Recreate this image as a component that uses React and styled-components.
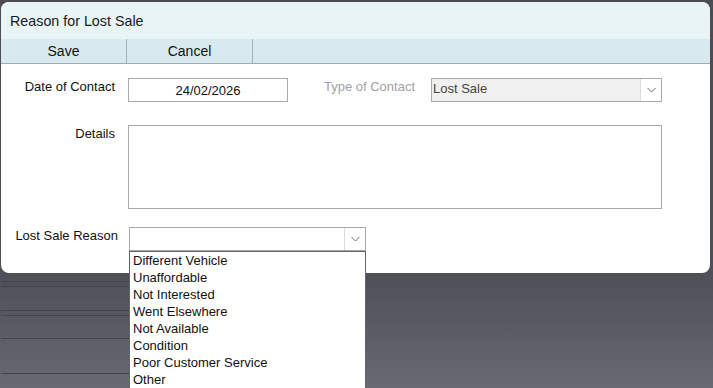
import React from "react";
import styled, { createGlobalStyle } from "styled-components";

const Global = createGlobalStyle`
  html, body { margin: 0; padding: 0; }
  body { font-family: "Liberation Sans", Arial, sans-serif; }
  * { box-sizing: border-box; }
`;

const Screen = styled.div`
  width: 713px;
  height: 388px;
  overflow: hidden;
  padding: 2px 3px 0 1px;
  display: flex;
  flex-direction: column;
  background: linear-gradient(to bottom, #4b4c54 0px, #4e4f57 275px, #676a72 388px);
`;

const Dialog = styled.div`
  position: relative;
  z-index: 1;
  background: #ffffff;
  border-radius: 8px;
  display: flex;
  flex-direction: column;
`;

const TitleBar = styled.div`
  height: 37px;
  padding: 0 9px;
  display: flex;
  align-items: center;
  background: #e8f4f6;
  border-radius: 8px 8px 0 0;
  font-size: 14.3px;
  color: #1a1a1a;
`;

const Toolbar = styled.div`
  height: 25px;
  display: flex;
  background: #d8eaf0;
  border-bottom: 1px solid #a3acb4;
`;

const ToolButton = styled.button`
  width: 126px;
  height: 24px;
  padding: 0;
  border: none;
  border-right: 1px solid #a8b0b8;
  background: transparent;
  font-family: "Liberation Sans", Arial, sans-serif;
  font-size: 14px;
  color: #111;
  display: flex;
  align-items: center;
  justify-content: center;
`;

const Body = styled.div`
  padding: 14px 0 22px 0;
  display: flex;
  flex-direction: column;
`;

const Row = styled.div`
  display: flex;
  align-items: flex-start;
  margin-top: ${(p) => p.$top || 0}px;
`;

const Label = styled.div`
  width: ${(p) => p.$w}px;
  text-align: right;
  font-size: 13px;
  line-height: 16px;
  padding-top: ${(p) => p.$pt ?? 0}px;
  color: ${(p) => (p.$muted ? "#a2a2a2" : "#111")};
  flex: none;
`;

const TextBox = styled.div`
  margin-left: ${(p) => p.$ml}px;
  width: ${(p) => p.$w}px;
  height: ${(p) => p.$h}px;
  border: 1px solid #a9a9a9;
  background: #fff;
  font-size: 13px;
  color: #111;
  display: flex;
  align-items: center;
  justify-content: center;
  flex: none;
`;

const SelectBox = styled.div`
  position: relative;
  margin-left: ${(p) => p.$ml}px;
  width: ${(p) => p.$w}px;
  height: 24px;
  border: 1px solid #a9a9a9;
  background: ${(p) => (p.$disabled ? "#f0f0f0" : "#fff")};
  display: flex;
  align-items: stretch;
  flex: none;
`;

const SelectValue = styled.div`
  flex: 1;
  padding-left: 1px;
  font-size: 13px;
  line-height: 19px;
  color: #444;
`;

const ArrowButton = styled.div`
  width: 21px;
  background: #fff;
  border-left: 1px solid #dcdcdc;
  display: flex;
  align-items: center;
  justify-content: center;
`;

const DropList = styled.div`
  position: absolute;
  left: -1px;
  top: 23px;
  width: 237px;
  background: #fff;
  border: 1px solid #646464;
  border-bottom: none;
  display: flex;
  flex-direction: column;
  z-index: 5;
`;

const Option = styled.div`
  height: 17px;
  line-height: 17px;
  padding-left: 3px;
  font-size: 13px;
  color: #111;
  white-space: nowrap;
`;

const BackRows = styled.div`
  display: flex;
  flex-direction: column;
`;

const Rule = styled.div`
  width: 130px;
  height: 1px;
  margin-top: ${(p) => p.$gap}px;
  background: #44454c;
`;

const Chevron = () => (
  <svg width="9" height="6" viewBox="0 0 9 6">
    <polyline points="0.5,1 4.5,5 8.5,1" fill="none" stroke="#6a6a6a" strokeWidth="1" />
  </svg>
);

const reasons = [
  "Different Vehicle",
  "Unaffordable",
  "Not Interested",
  "Went Elsewhere",
  "Not Available",
  "Condition",
  "Poor Customer Service",
  "Other",
];

export default function App() {
  return (
    <>
      <Global />
      <Screen>
        <Dialog>
          <TitleBar>Reason for Lost Sale</TitleBar>
          <Toolbar>
            <ToolButton>Save</ToolButton>
            <ToolButton>Cancel</ToolButton>
          </Toolbar>
          <Body>
            <Row>
              <Label $w={114} $pt={1}>Date of Contact</Label>
              <TextBox $ml={13} $w={160} $h={24}>24/02/2026</TextBox>
              <Label $w={127} $pt={1} $muted>Type of Contact</Label>
              <SelectBox $ml={16} $w={231} $disabled>
                <SelectValue>Lost Sale</SelectValue>
                <ArrowButton>
                  <Chevron />
                </ArrowButton>
              </SelectBox>
            </Row>
            <Row $top={23}>
              <Label $w={114} $pt={1}>Details</Label>
              <TextBox $ml={13} $w={534} $h={84} />
            </Row>
            <Row $top={18}>
              <Label $w={117} $pt={1}>Lost Sale Reason</Label>
              <SelectBox $ml={11} $w={237}>
                <SelectValue />
                <ArrowButton>
                  <Chevron />
                </ArrowButton>
                <DropList>
                  {reasons.map((r) => (
                    <Option key={r}>{r}</Option>
                  ))}
                </DropList>
              </SelectBox>
            </Row>
          </Body>
        </Dialog>
        <BackRows>
          <Rule $gap={8} />
          <Rule $gap={4} />
          <Rule $gap={23} />
          <Rule $gap={4} />
          <Rule $gap={22} />
          <Rule $gap={34} />
        </BackRows>
      </Screen>
    </>
  );
}
